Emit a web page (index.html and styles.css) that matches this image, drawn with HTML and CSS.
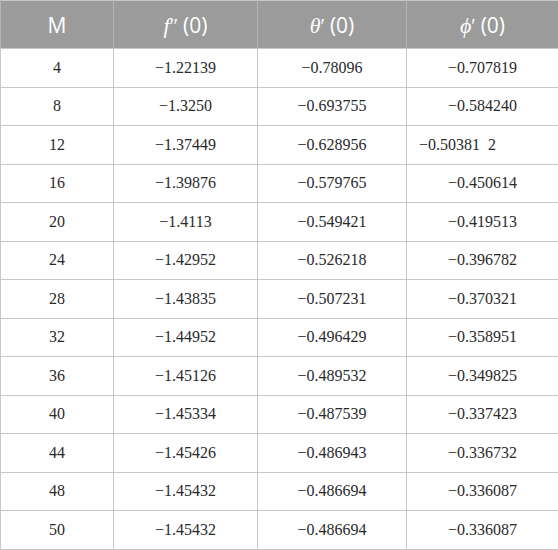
FILE: index.html
```html
<!DOCTYPE html>
<html>
<head>
<meta charset="utf-8">
<link rel="stylesheet" href="styles.css">
</head>
<body>
<table class="data">
  <colgroup>
    <col class="c1"><col class="c2"><col class="c3"><col class="c4">
  </colgroup>
  <thead>
    <tr>
      <th>M</th>
      <th><i class="sym">f</i><span class="pr">″</span>(0)</th>
      <th><i class="sym">θ</i><span class="pr">′</span>(0)</th>
      <th><i class="sym">ϕ</i><span class="pr">′</span>(0)</th>
    </tr>
  </thead>
  <tbody>
    <tr><td>4</td><td>−1.22139</td><td>−0.78096</td><td>−0.707819</td></tr>
    <tr><td>8</td><td>−1.3250</td><td>−0.693755</td><td>−0.584240</td></tr>
    <tr><td>12</td><td>−1.37449</td><td>−0.628956</td><td class="left">−0.50381&nbsp;&nbsp;2</td></tr>
    <tr><td>16</td><td>−1.39876</td><td>−0.579765</td><td>−0.450614</td></tr>
    <tr><td>20</td><td>−1.4113</td><td>−0.549421</td><td>−0.419513</td></tr>
    <tr><td>24</td><td>−1.42952</td><td>−0.526218</td><td>−0.396782</td></tr>
    <tr><td>28</td><td>−1.43835</td><td>−0.507231</td><td>−0.370321</td></tr>
    <tr><td>32</td><td>−1.44952</td><td>−0.496429</td><td>−0.358951</td></tr>
    <tr><td>36</td><td>−1.45126</td><td>−0.489532</td><td>−0.349825</td></tr>
    <tr><td>40</td><td>−1.45334</td><td>−0.487539</td><td>−0.337423</td></tr>
    <tr><td>44</td><td>−1.45426</td><td>−0.486943</td><td>−0.336732</td></tr>
    <tr><td>48</td><td>−1.45432</td><td>−0.486694</td><td>−0.336087</td></tr>
    <tr><td>50</td><td>−1.45432</td><td>−0.486694</td><td>−0.336087</td></tr>
  </tbody>
</table>
</body>
</html>
```
FILE: styles.css
```css
html, body {
  margin: 0;
  padding: 0;
  background: #ffffff;
  font-family: "Liberation Serif", serif;
}
.data {
  border-collapse: collapse;
  width: 558px;
  table-layout: fixed;
  border: 1px solid #c8c8c8;
}
.c1 { width: 113px; }
.c2 { width: 144px; }
.c3 { width: 149px; }
.c4 { width: 152px; }
.data th {
  background: #9b9b9b;
  color: #ffffff;
  font-family: "Open Sans", "Noto Sans", sans-serif;
  font-weight: normal;
  font-size: 21px;
  height: 47px;
  padding: 0;
  border-left: 1px solid #b5b5b5;
  border-right: 1px solid #b5b5b5;
  border-bottom: 1px solid #c8c8c8;
  text-align: center;
  vertical-align: middle;
}
.sym {
  font-family: "Liberation Serif", serif;
  font-style: italic;
  font-size: 22px;
}
.pr {
  font-family: "Liberation Serif", serif;
  font-size: 20px;
  margin-right: 5px;
}
.data td {
  font-family: "Liberation Serif", serif;
  font-size: 16px;
  color: #2a2a2a;
  text-align: center;
  vertical-align: middle;
  height: 37.5px;
  padding: 0;
  border: 1px solid #c8c8c8;
}
.data td.left {
  text-align: left;
  padding-left: 12px;
}
```
